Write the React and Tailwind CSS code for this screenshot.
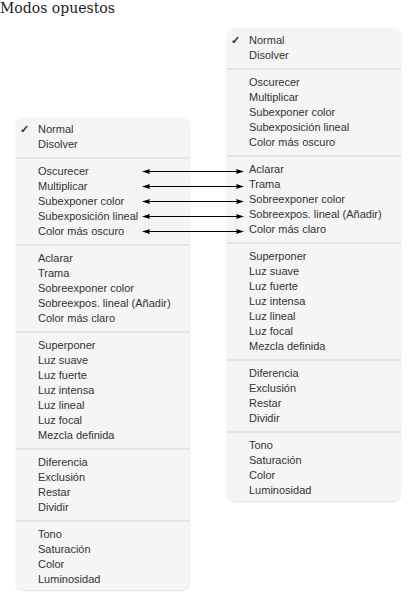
import React from "react";

const groups = [
  ["Normal", "Disolver"],
  ["Oscurecer", "Multiplicar", "Subexponer color", "Subexposición lineal", "Color más oscuro"],
  ["Aclarar", "Trama", "Sobreexponer color", "Sobreexpos. lineal (Añadir)", "Color más claro"],
  ["Superponer", "Luz suave", "Luz fuerte", "Luz intensa", "Luz lineal", "Luz focal", "Mezcla definida"],
  ["Diferencia", "Exclusión", "Restar", "Dividir"],
  ["Tono", "Saturación", "Color", "Luminosidad"],
];

function Menu({ className }) {
  return (
    <div
      className={
        "w-[174px] rounded-[8px] bg-[#f5f5f5] pt-[5px] pb-[3px] shadow-[0_1px_2px_rgba(0,0,0,0.12)] text-[11px] leading-[15px] text-[#333333] " +
        className
      }
      style={{ fontFamily: '"Liberation Sans", Arial, sans-serif' }}
    >
      {groups.map((g, gi) => (
        <div key={gi}>
          {gi > 0 && <div className="my-[5px] h-[2px] bg-[#e4e4e4]" />}
          {g.map((item, i) => (
            <div key={i} className="flex h-[15px] items-center">
              <span className="w-[22px] pl-[4px] text-[11px] font-bold">
                {gi === 0 && i === 0 ? "✓" : ""}
              </span>
              <span>{item}</span>
            </div>
          ))}
        </div>
      ))}
    </div>
  );
}

export default function App() {
  const ys = [171.5, 186.5, 201.5, 216.5, 231.5];
  return (
    <div className="relative h-[607px] w-[414px] overflow-hidden bg-white">
      <div
        className="h-[18px] text-[14px] leading-[17px] text-[#222222]"
        style={{ fontFamily: '"DejaVu Serif", serif' }}
      >
        Modos opuestos
      </div>
      <div className="mt-[10px] flex items-start gap-[37px] pl-[16px]">
        <Menu className="mt-[89px]" />
        <Menu className="" />
      </div>
      <svg
        className="pointer-events-none absolute left-0 top-0"
        width="414"
        height="607"
        viewBox="0 0 414 607"
      >
        {ys.map((y, i) => (
          <g key={i}>
            <line x1="148" y1={y} x2="238" y2={y} stroke="#000" strokeWidth="1" />
            <polygon points={`142,${y} 150,${y - 2.5} 149,${y} 150,${y + 2.5}`} fill="#000" />
            <polygon points={`244,${y} 236,${y - 2.5} 237,${y} 236,${y + 2.5}`} fill="#000" />
          </g>
        ))}
      </svg>
    </div>
  );
}
